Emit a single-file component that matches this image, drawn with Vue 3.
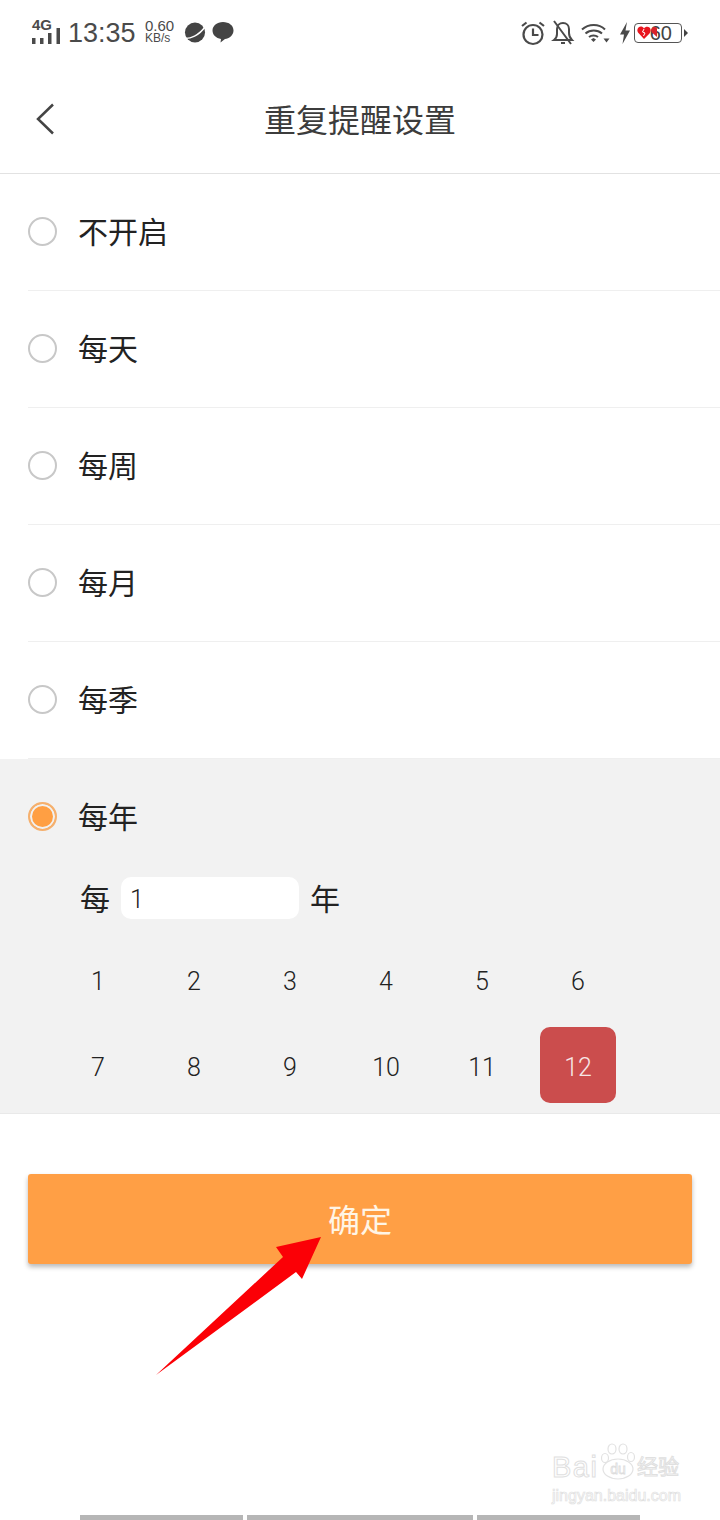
<template>
  <div class="page">
    <div class="status">
      <div class="status-left">
        <div class="signal">
          <span class="net">4G</span>
          <svg width="29" height="16" viewBox="0 0 29 16"><rect x="0" y="10" width="3.500" height="6" /><rect x="8" y="10" width="3.500" height="6" /><rect x="16" y="5" width="3.500" height="11" /><rect x="24.500" y="0" width="3.500" height="16" /></svg>
        </div>
        <span class="time">13:35</span>
        <div class="speed"><span class="speed-num">0.60</span><span class="speed-unit">KB/s</span></div>
        <svg class="planet" width="22" height="21" viewBox="0 0 23 21">
          <circle cx="11.500" cy="10.500" r="10.500" fill="#444" />
          <path d="M0 16.500c6 1 16-3 22-12" fill="none" stroke="#fff" stroke-width="1.500" />
        </svg>
        <svg width="22" height="21" viewBox="0 0 22 21"><path d="M11 0c6 0 10.500 3.500 10.500 8.500s-4.500 8-8.500 8.500l-4.500 3.500.5-3.500C4 16 .5 13 .5 8.500S5 0 11 0z" fill="#444" /></svg>
      </div>
      <div class="status-right">
        <svg class="alarm" width="26" height="26" viewBox="0 0 26 26" fill="none" stroke="#4a4a4a" stroke-width="2.200">
          <circle cx="13" cy="14.500" r="9.500" />
          <path d="M13 8.500v6.500h5.500M2 6l4.500-3.500M24 6l-4.500-3.500" />
        </svg>
        <svg width="24" height="26" viewBox="0 0 24 26" fill="none" stroke="#4a4a4a" stroke-width="2">
          <path d="M3 20h18c-2-2-3-3.500-3-7V9c0-3.500-2.500-6-6-6S6 5.500 6 9v5c0 3-1 4.500-3 6zM10 23h4M3 1l17 23" />
        </svg>
        <svg class="wifi" width="30" height="22" viewBox="0 0 30 22" fill="none" stroke="#4a4a4a" stroke-width="2">
          <path d="M1 7.500c6.500-6 17-6 23 0M4.500 11.500c4.500-4 12-4 16.500 0M8 15c2.500-2 6.500-2 9 0" />
          <path d="M10 17.500l2.500-1.500 2.500 1.500-2.500 2.500z" fill="#4a4a4a" stroke="none" />
          <path d="M22.500 16.500h6l-3 4z" fill="#4a4a4a" stroke="none" />
        </svg>
        <svg class="bolt" width="12" height="22" viewBox="0 0 12 22"><path d="M8 0L1 12.500h4L3.500 22 11 8.500H6.500z" fill="#4a4a4a" /></svg>
        <div class="battery">
          <span class="hearts">
            <svg width="21" height="13" viewBox="0 0 21 13">
              <path d="M7 13L1 6.500C-1 3 2 0 4.500 .5 5.500 .7 6.500 1.500 7 2.500 8 .5 11 0 12.500 1.500 14.500 3.500 13.500 6 12.500 7.500z" fill="#e8151f" />
              <path d="M7 3l-1.500 3 2.500 1-1.500 3" fill="none" stroke="#fff" stroke-width="1" />
              <path d="M20 11l-5-4.500C13 3.500 15.500 .5 18 1c1 .2 1.500 .7 2 1.500z" fill="#d9232b" />
            </svg>
          </span>
          <span class="level">60</span>
        </div>
        <span class="battery-tip"></span>
      </div>
    </div>

    <div class="nav">
      <svg class="back" width="18" height="32" viewBox="0 0 18 32" fill="none" stroke="#444" stroke-width="2.500"><path d="M17 1.500L2 16l15 14.500" /></svg>
      <span class="title">重复提醒设置</span>
    </div>

    <div v-for="item in options" :key="item" class="row">
      <div class="row-inner">
        <span class="radio"></span>
        <span class="label">{{ item }}</span>
      </div>
    </div>

    <div class="selected">
      <div class="selected-head">
        <span class="radio radio-on"></span>
        <span class="label">每年</span>
      </div>
      <div class="every">
        <span class="every-text">每</span>
        <div class="input">1</div>
        <span class="every-text">年</span>
      </div>
      <div class="months">
        <div v-for="m in 12" :key="m" class="month" :class="{ active: m === 12 }">{{ m }}</div>
      </div>
    </div>

    <div class="ok">确定</div>

    <svg class="arrow" width="170" height="145" viewBox="0 0 170 145">
      <path d="M1 140L128 22 121 12 166 2 147 44 141 37z" fill="#fb0006" />
    </svg>

    <div class="mark">
      <div class="mark-top">
        <span class="mark-bai">Bai</span>
        <svg class="paw" width="40" height="37" viewBox="0 0 40 37" fill="none" stroke="#e2e2e2" stroke-width="1.200">
          <ellipse cx="7" cy="15" rx="3.500" ry="4.500" />
          <ellipse cx="14" cy="6" rx="4" ry="5" />
          <ellipse cx="25" cy="6" rx="4" ry="5" />
          <ellipse cx="33" cy="14" rx="3.500" ry="4.500" />
          <ellipse cx="20" cy="26" rx="15" ry="10" />
          <text x="20" y="31" text-anchor="middle" class="paw-text">du</text>
        </svg>
        <span class="mark-cn">经验</span>
      </div>
      <div class="mark-url">jingyan.baidu.com</div>
    </div>

    <div class="bars">
      <span class="bar bar-side"></span>
      <span class="bar bar-mid"></span>
      <span class="bar bar-side"></span>
    </div>
  </div>
</template>

<script setup>
const options = ['不开启', '每天', '每周', '每月', '每季']
</script>

<style>
body {
  background: #fff;
}
</style>

<style scoped>
.page {
  position: relative;
  width: 720px;
  height: 1520px;
  overflow: hidden;
  background: #fff;
  display: flex;
  flex-direction: column;
  font-family: Roboto, "Noto Sans CJK SC", sans-serif;
  color: #222;
}

.status {
  height: 66px;
  padding: 0 32px;
  display: flex;
  justify-content: space-between;
  align-items: center;
  color: #4a4a4a;
  box-sizing: border-box;
}
.status-left {
  display: flex;
  align-items: center;
}
.status-right {
  display: flex;
  align-items: center;
}
.alarm {
  margin-right: 5px;
}
.signal {
  width: 29px;
  height: 26px;
  position: relative;
  margin-right: 7px;
  margin-top: -5px;
  display: flex;
  align-items: flex-end;
}
.signal svg {
  fill: #4a4a4a;
}
.net {
  position: absolute;
  left: 0;
  top: -2px;
  font: bold 15px "Liberation Sans", sans-serif;
}
.time {
  font: 27px "Liberation Sans", sans-serif;
  width: 77px;
}
.speed {
  display: flex;
  flex-direction: column;
  width: 39px;
  font-family: "Liberation Sans", sans-serif;
  line-height: 12px;
  margin-top: -2px;
}
.speed-num {
  font-size: 15px;
}
.speed-unit {
  font-size: 12px;
}
.planet {
  margin-right: 6px;
  margin-top: -2px;
}
.status-left > svg:last-child {
  margin-top: -2px;
}
.wifi {
  margin-left: 6px;
}
.bolt {
  margin-left: 8px;
}
.battery {
  width: 48px;
  height: 20px;
  margin-left: 3px;
  border: 1px solid #555;
  border-radius: 4px;
  box-sizing: border-box;
  position: relative;
  display: flex;
  align-items: center;
  justify-content: flex-end;
  padding-right: 9px;
}
.hearts {
  position: absolute;
  left: 2px;
  top: 2px;
  line-height: 0;
  z-index: 1;
}
.level {
  font: 20px "Liberation Sans", sans-serif;
  color: #444;
}
.battery-tip {
  width: 0;
  height: 0;
  margin-left: 2px;
  border-left: 4px solid #444;
  border-top: 4px solid transparent;
  border-bottom: 4px solid transparent;
}

.nav {
  height: 108px;
  flex: none;
  box-sizing: border-box;
  border-bottom: 1px solid #e2e2e2;
  display: flex;
  align-items: center;
  justify-content: center;
  position: relative;
  padding-bottom: 4px;
}
.back {
  position: absolute;
  left: 36px;
  top: 37px;
}
.title {
  font-size: 32px;
  color: #3c3c3c;
  font-weight: 400;
}

.row {
  height: 117px;
  flex: none;
  padding-left: 28px;
  box-sizing: border-box;
}
.row-inner {
  height: 100%;
  box-sizing: border-box;
  border-bottom: 1px solid #efefef;
  display: flex;
  align-items: center;
  padding-bottom: 2px;
}
.radio {
  width: 29px;
  height: 29px;
  flex: none;
  box-sizing: border-box;
  border: 2px solid #c8c8c8;
  border-radius: 50%;
  margin-right: 21px;
}
.radio-on {
  border-color: #f5b06e;
  background: #ff9f43;
  box-shadow: inset 0 0 0 2px #f1f1f1;
}
.label {
  font-size: 30px;
  color: #222;
  margin-top: -2px;
}

.selected {
  height: 355px;
  flex: none;
  background: #f2f2f2;
  border-bottom: 1px solid #e9e9e9;
  box-sizing: border-box;
}
.selected-head {
  display: flex;
  align-items: center;
  padding: 41px 0 0 28px;
  height: 32px;
}
.every {
  display: flex;
  align-items: center;
  margin-top: 45px;
  padding-left: 80px;
}
.every-text {
  font-size: 30px;
  color: #222;
  margin-top: -2px;
}
.input {
  width: 178px;
  height: 42px;
  margin: 0 11px 0 11px;
  padding-left: 9px;
  box-sizing: border-box;
  background: #fff;
  border-radius: 10px;
  font-size: 25px;
  font-weight: 300;
  line-height: 46px;
  color: #222;
}
.months {
  display: grid;
  grid-template-columns: repeat(6, 76px);
  grid-auto-rows: 76px;
  column-gap: 20px;
  row-gap: 10px;
  margin-top: 22px;
  padding-left: 60px;
}
.month {
  display: flex;
  align-items: center;
  justify-content: center;
  font-size: 25px;
  font-weight: 300;
  color: #222;
  border-radius: 10px;
  padding-top: 4px;
  box-sizing: border-box;
}
.month.active {
  background: #cb4d4d;
  color: #f7e6e6;
}

.ok {
  height: 90px;
  flex: none;
  margin: 60px 28px 0;
  padding-bottom: 2px;
  box-sizing: border-box;
  background: #ff9f45;
  border-radius: 3px;
  box-shadow: 0 3px 5px rgba(0, 0, 0, 0.28);
  display: flex;
  align-items: center;
  justify-content: center;
  font-size: 32px;
  color: #fff5e6;
}

.arrow {
  position: absolute;
  left: 155px;
  top: 1235px;
}

.mark {
  position: absolute;
  left: 552px;
  top: 1442px;
  width: 132px;
  color: #fff;
  -webkit-text-stroke: 1px #e0e0e0;
}
.mark-top {
  display: flex;
  align-items: flex-end;
  height: 38px;
}
.mark-bai {
  font: 29px/26px "Liberation Sans", sans-serif;
  letter-spacing: 1.500px;
  width: 46px;
}
.paw {
  flex: none;
  width: 40px;
  margin-right: -1px;
}
.paw-text {
  font: 14px "Liberation Sans", sans-serif;
  fill: #fff;
  stroke: #ddd;
  stroke-width: 0.800;
}
.mark-cn {
  font-size: 21px;
  line-height: 26px;
  white-space: nowrap;
}
.mark-url {
  font: 16px/18px "Liberation Sans", sans-serif;
  margin-top: 7px;
  white-space: nowrap;
  -webkit-text-stroke: 0.700px #e0e0e0;
}

.bars {
  margin-top: auto;
  display: flex;
  gap: 4px;
  padding-left: 80px;
  height: 5px;
}
.bar {
  height: 5px;
  background: #b6b6b6;
}
.bar-side {
  width: 163px;
}
.bar-mid {
  width: 226px;
}
</style>
